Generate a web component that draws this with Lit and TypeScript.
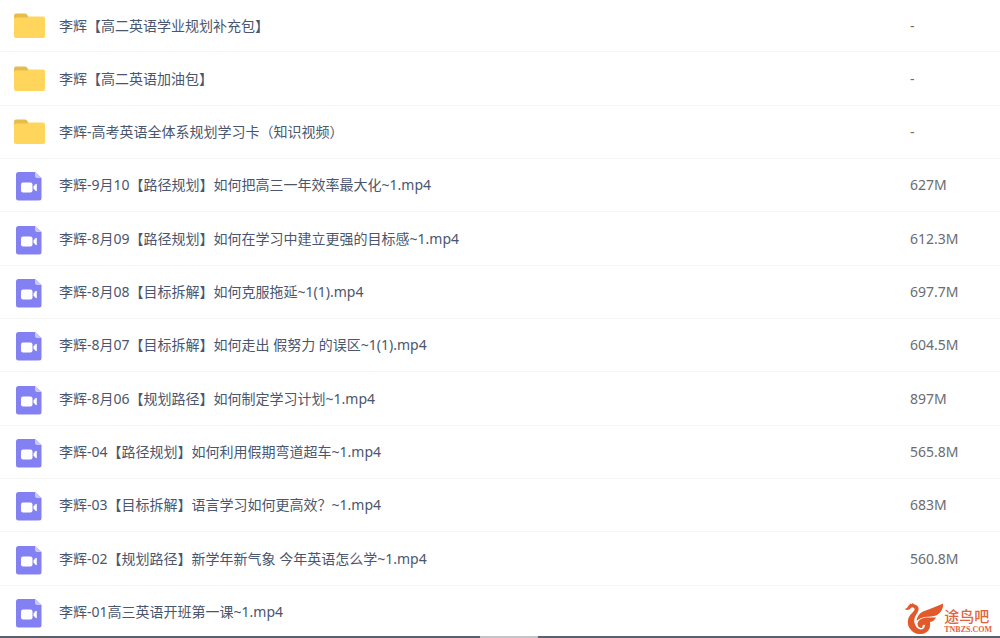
import { LitElement, html, css, svg } from "lit";
import { customElement, property } from "lit/decorators.js";

interface Entry {
  name: string;
  size: string;
  kind: "folder" | "video";
}

const entries: Entry[] = [
  { name: "李辉【高二英语学业规划补充包】", size: "-", kind: "folder" },
  { name: "李辉【高二英语加油包】", size: "-", kind: "folder" },
  { name: "李辉-高考英语全体系规划学习卡（知识视频）", size: "-", kind: "folder" },
  { name: "李辉-9月10【路径规划】如何把高三一年效率最大化~1.mp4", size: "627M", kind: "video" },
  { name: "李辉-8月09【路径规划】如何在学习中建立更强的目标感~1.mp4", size: "612.3M", kind: "video" },
  { name: "李辉-8月08【目标拆解】如何克服拖延~1(1).mp4", size: "697.7M", kind: "video" },
  { name: "李辉-8月07【目标拆解】如何走出 假努力 的误区~1(1).mp4", size: "604.5M", kind: "video" },
  { name: "李辉-8月06【规划路径】如何制定学习计划~1.mp4", size: "897M", kind: "video" },
  { name: "李辉-04【路径规划】如何利用假期弯道超车~1.mp4", size: "565.8M", kind: "video" },
  { name: "李辉-03【目标拆解】语言学习如何更高效？~1.mp4", size: "683M", kind: "video" },
  { name: "李辉-02【规划路径】新学年新气象 今年英语怎么学~1.mp4", size: "560.8M", kind: "video" },
  { name: "李辉-01高三英语开班第一课~1.mp4", size: "", kind: "video" },
];

const folderShape = svg`
  <path d="M1 7V5.500Q1 3.500 3 3.500H12Q13.300 3.500 14 4.500L15.500 7V12H1Z" fill="#e5bd4c"/>
  <path d="M1 9.500Q1 7.500 3 7.500H14L15.500 6.500H30Q32 6.500 32 8.500V26Q32 28 30 28H3Q1 28 1 26Z" fill="#ffd55c"/>`;

const videoShape = svg`
  <path d="M5.500 3H22L28.500 9V29Q28.500 31.500 26 31.500H5.500Q3 31.500 3 29V5.500Q3 3 5.500 3Z" fill="#8280f2"/>
  <path d="M22 3L28.500 9H24Q22 9 22 7Z" fill="#c9c8fb"/>
  <rect x="8" y="13.500" width="11.500" height="10" rx="2" fill="#fff"/>
  <path d="M20.500 17.500L22.500 15.200Q23.800 14.300 23.800 15.500V21.500Q23.800 22.700 22.500 21.800L20.500 19.500Z" fill="#fff"/>`;

@customElement("file-icon")
export class FileIcon extends LitElement {
  @property() kind: Entry["kind"] = "folder";

  static styles = css`
    :host {
      display: block;
      width: 32px;
      height: 32px;
    }
    .glyph {
      display: block;
    }
  `;

  render() {
    return html`<svg class="glyph" width="32" height="32" viewBox="0 0 32 32" aria-hidden="true">
      ${this.kind === "folder" ? folderShape : videoShape}
    </svg>`;
  }
}

@customElement("site-mark")
export class SiteMark extends LitElement {
  static styles = css`
    :host {
      display: flex;
      align-items: flex-end;
      color: #e0643c;
    }
    .bird {
      display: block;
    }
    .words {
      display: flex;
      flex-direction: column;
      gap: 1px;
    }
    .title {
      font: 500 15px/18px "Noto Sans CJK SC", sans-serif;
    }
    .domain {
      font: bold 8px/8px "Liberation Serif", serif;
    }
  `;

  render() {
    return html`
      <svg class="bird" width="40" height="32" viewBox="0 0 40 32" aria-hidden="true">
        <g fill="#e2592c">
          <path d="M0.500 7Q3 6.500 4 4.500Q4.500 2.800 6 2.500L5.500 1.500L8 2L8.500 1L10 2.200Q15.500 3.500 14.500 8Q13.800 10.500 12 13Q9.500 17 10.500 21Q12 26.500 16.500 27.500Q20.500 27.500 21 23Q19.500 22 18.500 24Q18 25.500 19 26Q13.500 26.500 13.500 21.500Q14.500 16.500 22 15.500H32Q30 19.500 26 20Q27 29 20 31.500Q14 33.500 8.500 29.500Q2 24 4.500 16Q6 12.500 9 10Q11.500 7.500 10 6Q8 4.500 6.500 6.500Q4.500 9 0.500 7Z"/>
          <path d="M12.500 19Q13 12.500 19 9.500Q26 7 32 4.500Q36 3 39 1.500Q39.500 8 34.500 12Q31 14.800 24 14.800Q16.500 15 12.500 19Z"/>
        </g>
      </svg>
      <div class="words">
        <span class="title">途鸟吧</span>
        <span class="domain">TNBZS.COM</span>
      </div>
    `;
  }
}

@customElement("app-root")
export class AppRoot extends LitElement {
  static styles = css`
    :host {
      display: flex;
      flex-direction: column;
      position: relative;
      height: 100vh;
      overflow: hidden;
      background: #fff;
      font: 14px/20px "Noto Sans", "Noto Sans CJK SC", sans-serif;
    }
    .list {
      flex: 1;
      min-height: 0;
      overflow: hidden;
    }
    .files {
      width: 100%;
      table-layout: fixed;
      border-collapse: separate;
      border-spacing: 0;
    }
    .row {
      height: 53px;
    }
    .row:first-child {
      height: 52px;
    }
    .row:nth-child(3n + 2) {
      height: 54px;
    }
    .cell {
      box-sizing: border-box;
      padding: 0;
      border-bottom: 1px solid #f4f5f7;
      vertical-align: middle;
      white-space: nowrap;
    }
    .row:last-child .cell {
      border-bottom-color: transparent;
    }
    .entry {
      display: flex;
      align-items: center;
      gap: 14px;
      padding-left: 13px;
      color: #4a566e;
    }
    .size {
      width: 90px;
      color: #6b6c70;
      text-align: left;
    }
    .mark {
      position: absolute;
      right: 8px;
      bottom: 4px;
    }
    .edge {
      display: flex;
      justify-content: center;
      height: 2px;
      background: #5b616c;
    }
    .grip {
      width: 58px;
      margin-left: 18px;
      background: #c3c4c8;
    }
  `;

  render() {
    return html`
      <main class="list">
        <table class="files">
          <tbody>
            ${entries.map(
              (e) => html`<tr class="row">
                <td class="cell">
                  <div class="entry">
                    <file-icon .kind=${e.kind}></file-icon>
                    <span>${e.name}</span>
                  </div>
                </td>
                <td class="cell size">${e.size}</td>
              </tr>`
            )}
          </tbody>
        </table>
      </main>
      <div class="edge"><div class="grip"></div></div>
      <site-mark class="mark"></site-mark>
    `;
  }
}
